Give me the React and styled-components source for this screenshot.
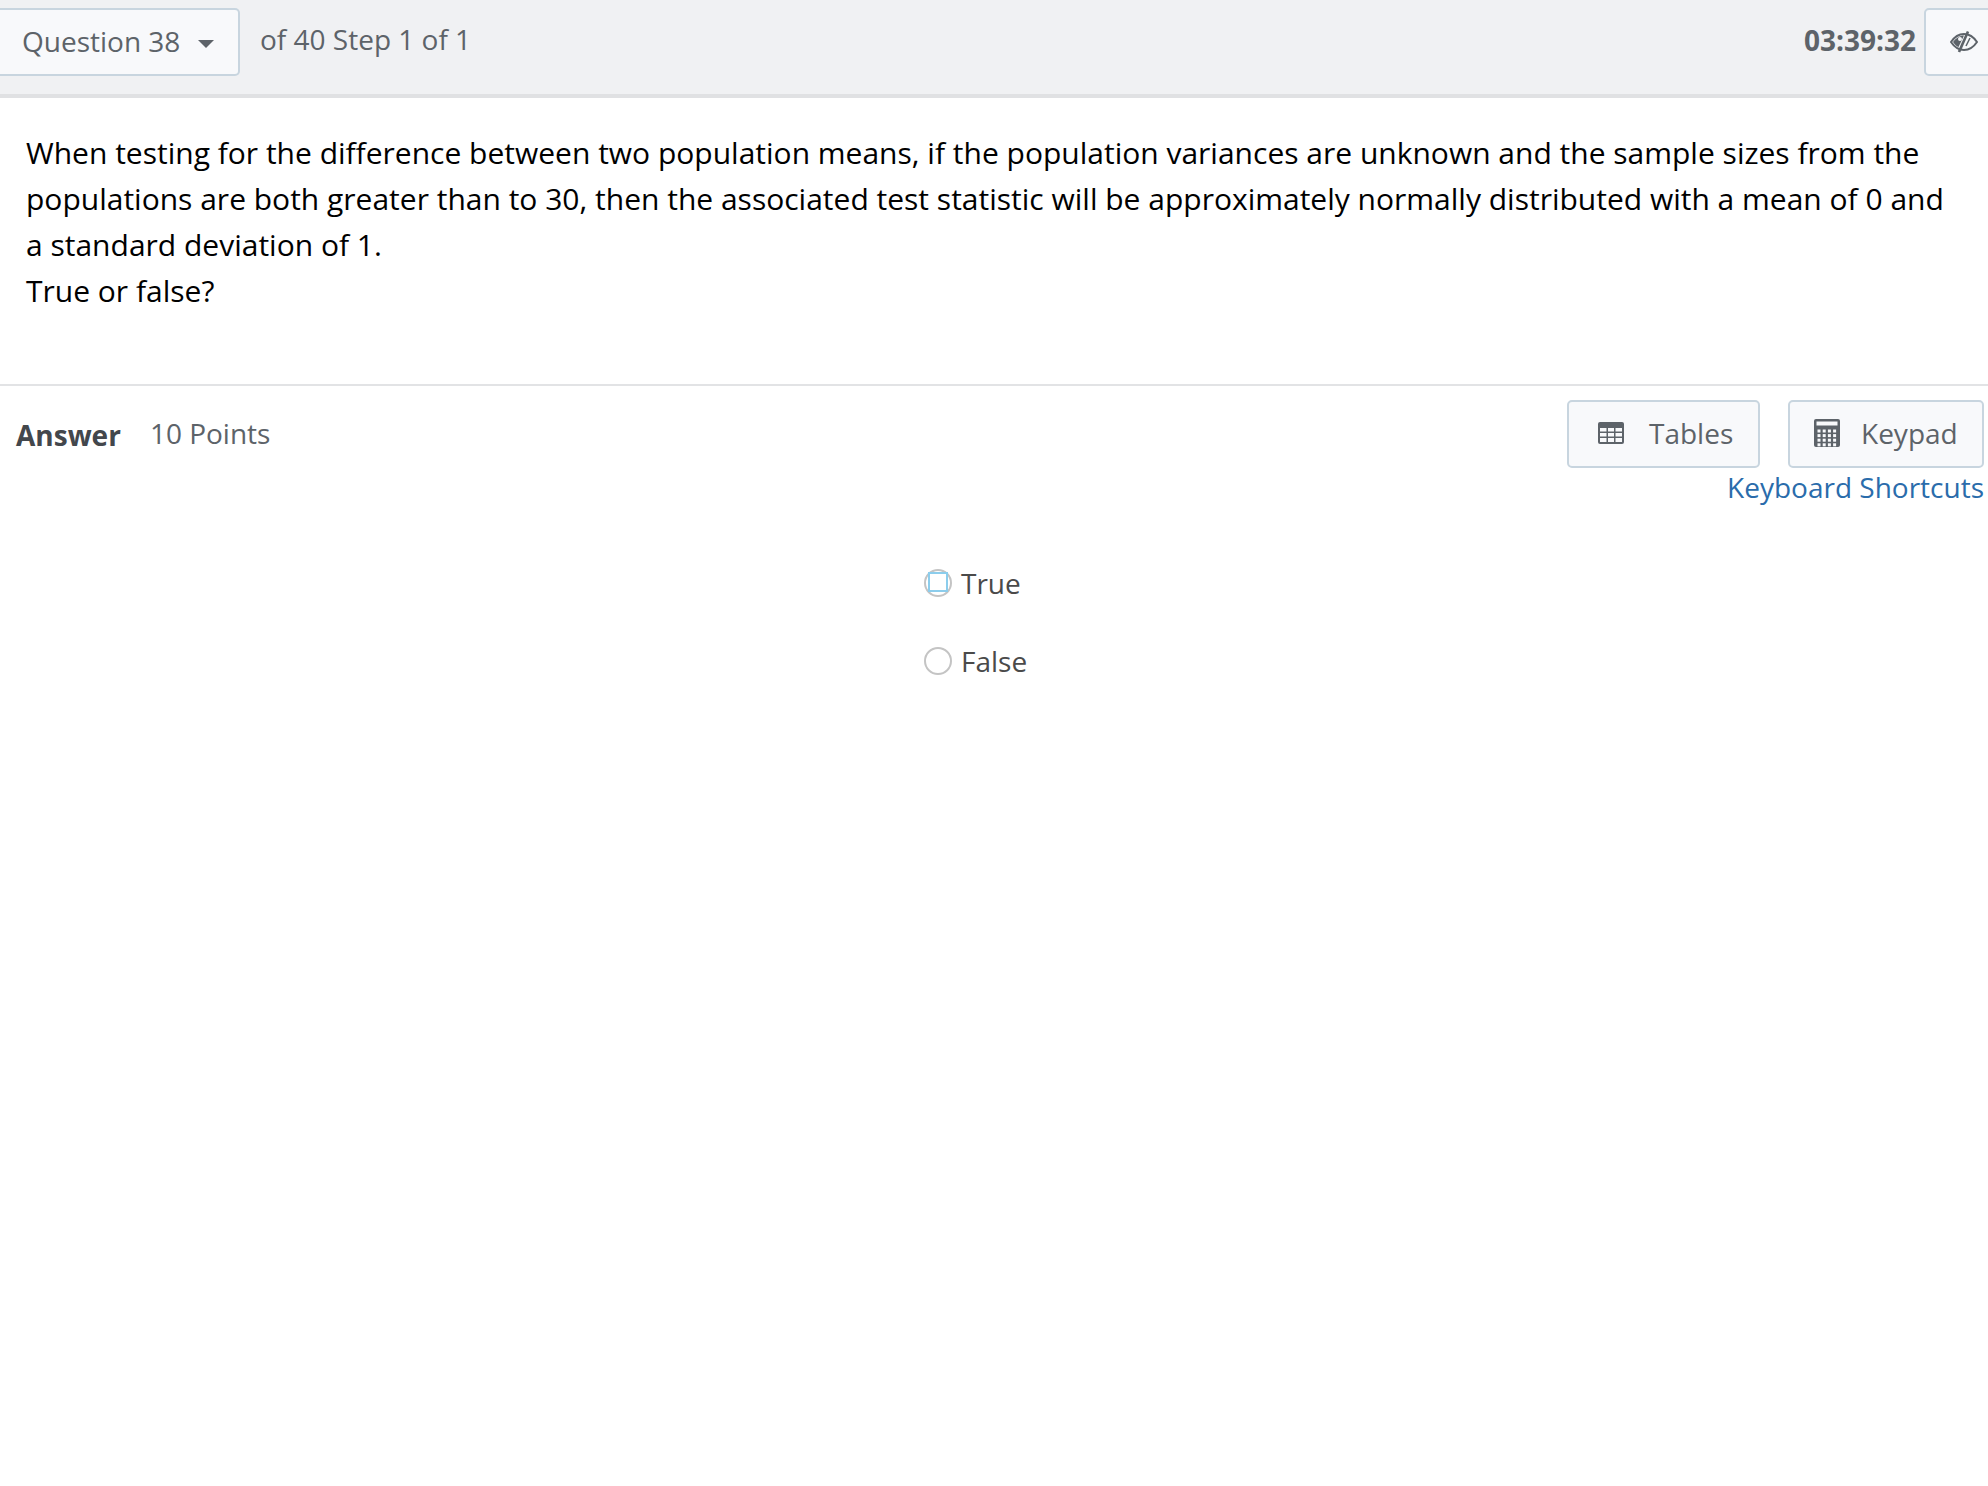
import React from "react";
import styled, { createGlobalStyle } from "styled-components";

const GlobalStyle = createGlobalStyle`
  html, body {
    margin: 0;
    padding: 0;
    background: #fff;
    overflow-x: hidden;
  }
  body {
    font-family: "Open Sans", "Liberation Sans", sans-serif;
  }
`;

const Page = styled.div`
  width: 1988px;
  height: 1486px;
  overflow: hidden;
  background: #fff;
`;

const TopBar = styled.div`
  height: 98px;
  box-sizing: border-box;
  display: flex;
  align-items: flex-start;
  background: #f0f1f3;
  border-bottom: 4px solid #e0e1e3;
  padding-top: 8px;
`;

const OutlineBox = styled.div`
  display: flex;
  align-items: center;
  box-sizing: border-box;
  background: #f8f9fb;
  border: 2px solid #c8d5df;
  border-radius: 5px;
  color: #5d6369;
`;

const QuestionSelect = styled(OutlineBox)`
  width: 240px;
  height: 68px;
  padding: 0 0 2px 22px;
  font-size: 28px;
  border-left: none;
  border-radius: 0 5px 5px 0;
`;

const Caret = styled.span`
  width: 0;
  height: 0;
  margin-left: 18px;
  margin-top: 6px;
  border-left: 8px solid transparent;
  border-right: 8px solid transparent;
  border-top: 8px solid #5d6369;
`;

const StepText = styled.div`
  margin-left: 20px;
  line-height: 62px;
  font-size: 28px;
  color: #5d6369;
`;

const Timer = styled.div`
  margin-left: auto;
  margin-right: 8px;
  line-height: 64px;
  font-size: 28px;
  font-weight: 700;
  color: #5d6369;
`;

const EyeButton = styled(OutlineBox)`
  width: 70px;
  height: 68px;
  margin-right: -6px;
  padding-left: 24px;
`;

const QuestionText = styled.div`
  height: 288px;
  padding: 32px 0 0 26px;
  box-sizing: border-box;
  border-bottom: 2px solid #e2e3e5;
  font-size: 30px;
  line-height: 46px;
  color: #000;
  white-space: nowrap;
`;

const AnswerRow = styled.div`
  display: flex;
  align-items: flex-start;
  padding: 14px 4px 0 16px;
`;

const AnswerLabel = styled.div`
  margin-top: 15px;
  font-size: 28px;
  line-height: 40px;
  font-weight: 700;
  color: #43474c;
`;

const Points = styled.div`
  margin-left: 29px;
  margin-top: 13px;
  font-size: 28px;
  line-height: 40px;
  color: #5d6369;
`;

const Tools = styled.div`
  margin-left: auto;
  display: flex;
  flex-direction: column;
  align-items: flex-end;
`;

const ToolButtons = styled.div`
  display: flex;
  gap: 28px;
`;

const ToolButton = styled(OutlineBox)`
  height: 68px;
  width: ${(p) => p.$width}px;
  padding: 0 0 2px ${(p) => p.$pad}px;
  gap: ${(p) => p.$gap}px;
  font-size: 28px;
`;

const ShortcutLink = styled.a`
  margin-top: -2px;
  font-size: 28px;
  line-height: 42px;
  color: #2a6cab;
`;

const Options = styled.div`
  margin-top: 55px;
  margin-left: 924px;
  display: flex;
  flex-direction: column;
  gap: 38px;
`;

const Option = styled.label`
  display: flex;
  align-items: center;
  gap: 9px;
  height: 40px;
  font-size: 28px;
  color: #4a4a4a;
`;

const RadioCircle = styled.span`
  position: relative;
  display: block;
  width: 28px;
  height: 28px;
  box-sizing: border-box;
  border: 2px solid #c4c4c4;
  border-radius: 50%;
  background: #fff;
`;

const FocusSquare = styled.span`
  position: absolute;
  left: 2px;
  top: 1px;
  width: 20px;
  height: 20px;
  box-sizing: border-box;
  border: 2px solid #8ccdec;
`;

const EyeOffIcon = () => (
  <svg width="28" height="22" viewBox="0 0 28 22">
    <path
      d="M1 11 C5 5 10 3 14 3 C18 3 23 5 27 11 C23 17 18 19 14 19 C10 19 5 17 1 11 Z"
      fill="none"
      stroke="#5d6369"
      strokeWidth="2"
    />
    <path d="M3 11 C6 7 10 4.5 14 4.5 L8.5 16 C7 15.5 5 14 3 11 Z" fill="#5d6369" />
    <circle cx="10" cy="8" r="2" fill="#f8f9fb" />
    <path d="M18 0.5 L9 21" stroke="#5d6369" strokeWidth="2.6" />
    <path d="M20 7 L16 15" stroke="#5d6369" strokeWidth="1.6" />
  </svg>
);

const TableIcon = () => (
  <svg width="26" height="22" viewBox="0 0 26 22">
    <rect width="26" height="22" rx="2" fill="#5d6369" />
    <g fill="#f8f9fb">
      <rect x="2" y="6" width="6.5" height="3.5" />
      <rect x="10" y="6" width="6" height="3.5" />
      <rect x="17.5" y="6" width="6.5" height="3.5" />
      <rect x="2" y="11" width="6.5" height="3.5" />
      <rect x="10" y="11" width="6" height="3.5" />
      <rect x="17.5" y="11" width="6.5" height="3.5" />
      <rect x="2" y="16" width="6.5" height="4" />
      <rect x="10" y="16" width="6" height="4" />
      <rect x="17.5" y="16" width="6.5" height="4" />
    </g>
  </svg>
);

const keypadDots = [];
for (let row = 0; row < 4; row++) {
  for (let col = 0; col < 4; col++) {
    keypadDots.push([3.5 + col * 5.2, 10.5 + row * 4.6]);
  }
}

const KeypadIcon = () => (
  <svg width="26" height="28" viewBox="0 0 26 28">
    <rect width="26" height="28" rx="2" fill="#5d6369" />
    <rect x="2.5" y="2.5" width="21" height="4" fill="#f8f9fb" />
    {keypadDots.map(([x, y]) => (
      <rect key={`${x}-${y}`} x={x} y={y} width="3" height="3" fill="#f8f9fb" />
    ))}
  </svg>
);

const App = () => {
  return (
    <Page>
      <GlobalStyle />
      <TopBar>
        <QuestionSelect>
          Question 38
          <Caret />
        </QuestionSelect>
        <StepText>of 40 Step 1 of 1</StepText>
        <Timer>03:39:32</Timer>
        <EyeButton>
          <EyeOffIcon />
        </EyeButton>
      </TopBar>
      <QuestionText>
        When testing for the difference between two population means, if the population variances are unknown and the sample sizes from the
        <br />
        populations are both greater than to 30, then the associated test statistic will be approximately normally distributed with a mean of 0 and
        <br />
        a standard deviation of 1.
        <br />
        True or false?
      </QuestionText>
      <AnswerRow>
        <AnswerLabel>Answer</AnswerLabel>
        <Points>10 Points</Points>
        <Tools>
          <ToolButtons>
            <ToolButton $width={193} $pad={29} $gap={25}>
              <TableIcon />
              Tables
            </ToolButton>
            <ToolButton $width={196} $pad={24} $gap={21}>
              <KeypadIcon />
              Keypad
            </ToolButton>
          </ToolButtons>
          <ShortcutLink>Keyboard Shortcuts</ShortcutLink>
        </Tools>
      </AnswerRow>
      <Options>
        <Option>
          <RadioCircle>
            <FocusSquare />
          </RadioCircle>
          True
        </Option>
        <Option>
          <RadioCircle />
          False
        </Option>
      </Options>
    </Page>
  );
};

export default App;
